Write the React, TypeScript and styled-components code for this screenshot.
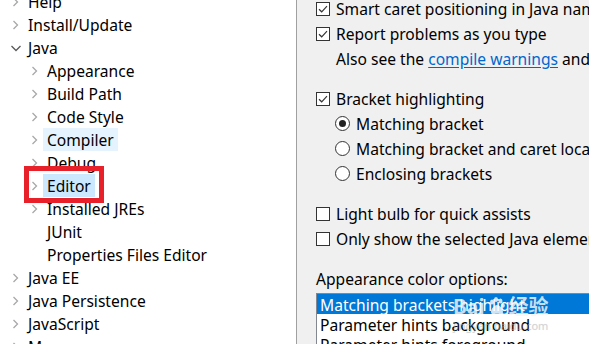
import React from "react";
import styled, { createGlobalStyle } from "styled-components";

const Global = createGlobalStyle`
  html, body { margin: 0; padding: 0; }
  body {
    width: 589px;
    height: 344px;
    overflow: hidden;
    font-family: "Noto Sans", "Noto Sans CJK SC", sans-serif;
    font-size: 15.6px;
    color: #000;
    background: #fff;
  }
`;

const Shell = styled.div`
  display: grid;
  grid-template-columns: 296px 1px 1fr;
  width: 589px;
  height: 344px;
  overflow: hidden;
`;

const TreePane = styled.div`
  background: #fff;
  overflow: hidden;
`;

const Divider = styled.div`
  background: #a0a0a0;
`;

const TreeList = styled.div`
  margin-top: -10px;
  display: flex;
  flex-direction: column;
`;

const Row = styled.div<{ $level: number }>`
  position: relative;
  display: flex;
  align-items: center;
  height: 23px;
  padding-left: ${(p) => 8 + p.$level * 19}px;
  white-space: nowrap;
`;

const Twisty = styled.span`
  width: 16px;
  height: 16px;
  flex: none;
  display: flex;
  align-items: center;
  justify-content: center;
`;

const Label = styled.span<{ $state?: "hover" | "selected" }>`
  display: flex;
  align-items: center;
  height: 23px;
  padding: 0 4px;
  background: ${(p) =>
    p.$state === "selected" ? "#cce8ff" : p.$state === "hover" ? "#e5f3ff" : "transparent"};
`;

const Callout = styled.div`
  position: absolute;
  left: 24px;
  top: -8px;
  width: 80px;
  height: 37px;
  box-sizing: border-box;
  border: 5px solid #e8202a;
  pointer-events: none;
`;

const Settings = styled.div`
  background: #f0f0f0;
  padding-left: 19px;
  overflow: hidden;
  white-space: nowrap;
`;

const Group = styled.div<{ $gap: number }>`
  display: flex;
  flex-direction: column;
  margin-top: ${(p) => p.$gap}px;
`;

const OptRow = styled.div<{ $indent?: number }>`
  display: flex;
  align-items: center;
  gap: 6px;
  height: 25px;
  padding-left: ${(p) => p.$indent ?? 0}px;
`;

const Box = styled.span`
  width: 14px;
  height: 14px;
  flex: none;
  box-sizing: border-box;
  border: 1px solid #333;
  background: #fff;
  display: flex;
  align-items: center;
  justify-content: center;
`;

const Radio = styled.span<{ $on?: boolean }>`
  width: 15px;
  height: 15px;
  flex: none;
  box-sizing: border-box;
  border: 1px solid #333;
  border-radius: 50%;
  background: #fff;
  display: flex;
  align-items: center;
  justify-content: center;
  &::after {
    content: "";
    width: 7px;
    height: 7px;
    border-radius: 50%;
    background: #222;
    display: ${(p) => (p.$on ? "block" : "none")};
  }
`;

const Link = styled.span`
  color: #0066cc;
  text-decoration: underline;
  text-underline-offset: 2px;
`;

const Caption = styled.div`
  height: 20px;
  display: flex;
  align-items: center;
  margin-top: 18px;
`;

const ListBox = styled.div`
  position: relative;
  margin-top: 4px;
  border: 1px solid #828790;
  border-right: none;
  background: #fff;
  height: 60px;
  overflow: hidden;
`;

const ListItem = styled.div<{ $selected?: boolean }>`
  height: 20px;
  box-sizing: border-box;
  padding-top: 2px;
  display: flex;
  align-items: center;
  padding-left: 3px;
  background: ${(p) => (p.$selected ? "#0078d7" : "transparent")};
  color: ${(p) => (p.$selected ? "#fff" : "#000")};
`;

const Watermark = styled.div`
  position: absolute;
  left: 136px;
  top: 0px;
  display: flex;
  flex-direction: column;
  align-items: center;
  color: rgba(255, 255, 255, 0.8);
  text-shadow: 0 0 1px rgba(0, 0, 0, 0.12);
  pointer-events: none;
`;

const MarkTitle = styled.div`
  display: flex;
  align-items: center;
  gap: 2px;
  font-family: "Noto Sans CJK SC", sans-serif;
  font-size: 20px;
  font-weight: 700;
  height: 23px;
`;

const MarkSub = styled.div`
  font-size: 11px;
  color: rgba(190, 190, 190, 0.5);
  margin-top: 1px;
`;

const Chevron = ({ open }: { open?: boolean }) =>
  open ? (
    <svg width="16" height="16" viewBox="0 0 16 16">
      <polyline points="3.5,6 8,10.5 12.5,6" fill="none" stroke="#5a5a5a" strokeWidth="1.3" />
    </svg>
  ) : (
    <svg width="16" height="16" viewBox="0 0 16 16">
      <polyline points="5.5,4 9.5,8 5.5,12" fill="none" stroke="#a8a8a8" strokeWidth="1.3" />
    </svg>
  );

const Check = () => (
  <svg width="12" height="12" viewBox="0 0 12 12">
    <polyline points="2,6.2 4.7,8.8 10,3.2" fill="none" stroke="#333" strokeWidth="1.2" />
  </svg>
);

const Paw = () => (
  <svg width="20" height="20" viewBox="0 0 20 20" fill="rgba(255,255,255,0.8)">
    <ellipse cx="5" cy="6" rx="2" ry="2.6" />
    <ellipse cx="9" cy="3.5" rx="2" ry="2.6" />
    <ellipse cx="13.5" cy="5" rx="2" ry="2.6" />
    <ellipse cx="16" cy="9.5" rx="1.8" ry="2.3" />
    <path d="M10 9c-3 0-6 4-6 7 0 2 2 2.5 3.5 2 1.5-.5 3.5-.5 5 0 1.5.5 3.5 0 3.5-2 0-3-3-7-6-7z" />
  </svg>
);

type TreeItem = {
  label: string;
  level: number;
  twisty?: "closed" | "open";
  state?: "hover" | "selected";
  callout?: boolean;
};

const tree: TreeItem[] = [
  { label: "Help", level: 0, twisty: "closed" },
  { label: "Install/Update", level: 0, twisty: "closed" },
  { label: "Java", level: 0, twisty: "open" },
  { label: "Appearance", level: 1, twisty: "closed" },
  { label: "Build Path", level: 1, twisty: "closed" },
  { label: "Code Style", level: 1, twisty: "closed" },
  { label: "Compiler", level: 1, twisty: "closed", state: "hover" },
  { label: "Debug", level: 1, twisty: "closed" },
  { label: "Editor", level: 1, twisty: "closed", state: "selected", callout: true },
  { label: "Installed JREs", level: 1, twisty: "closed" },
  { label: "JUnit", level: 1 },
  { label: "Properties Files Editor", level: 1 },
  { label: "Java EE", level: 0, twisty: "closed" },
  { label: "Java Persistence", level: 0, twisty: "closed" },
  { label: "JavaScript", level: 0, twisty: "closed" },
  { label: "Maven", level: 0, twisty: "closed" },
];

export default function App() {
  return (
    <>
      <Global />
      <Shell>
        <TreePane>
          <TreeList>
            {tree.map((t) => (
              <Row key={t.label} $level={t.level}>
                <Twisty>{t.twisty && <Chevron open={t.twisty === "open"} />}</Twisty>
                <Label $state={t.state}>{t.label}</Label>
                {t.callout && <Callout />}
              </Row>
            ))}
          </TreeList>
        </TreePane>
        <Divider />
        <Settings>
          <Group $gap={-4}>
            <OptRow>
              <Box><Check /></Box>
              <span>Smart caret positioning in Java names (overrides 'Smart caret positioning')</span>
            </OptRow>
            <OptRow>
              <Box><Check /></Box>
              <span>Report problems as you type</span>
            </OptRow>
            <OptRow $indent={20}>
              <span>
                Also see the <Link>compile warnings</Link> and errors
              </span>
            </OptRow>
          </Group>
          <Group $gap={15}>
            <OptRow>
              <Box><Check /></Box>
              <span>Bracket highlighting</span>
            </OptRow>
            <OptRow $indent={19}>
              <Radio $on />
              <span>Matching bracket</span>
            </OptRow>
            <OptRow $indent={19}>
              <Radio />
              <span>Matching bracket and caret location</span>
            </OptRow>
            <OptRow $indent={19}>
              <Radio />
              <span>Enclosing brackets</span>
            </OptRow>
          </Group>
          <Group $gap={15}>
            <OptRow>
              <Box />
              <span>Light bulb for quick assists</span>
            </OptRow>
            <OptRow>
              <Box />
              <span>Only show the selected Java element</span>
            </OptRow>
          </Group>
          <Caption>Appearance color options:</Caption>
          <ListBox>
            <ListItem $selected>Matching brackets highlight</ListItem>
            <ListItem>Parameter hints background</ListItem>
            <ListItem>Parameter hints foreground</ListItem>
            <Watermark>
              <MarkTitle>
                <span>Bai</span>
                <Paw />
                <span>经验</span>
              </MarkTitle>
              <MarkSub>jingyan.baidu.com</MarkSub>
            </Watermark>
          </ListBox>
        </Settings>
      </Shell>
    </>
  );
}
